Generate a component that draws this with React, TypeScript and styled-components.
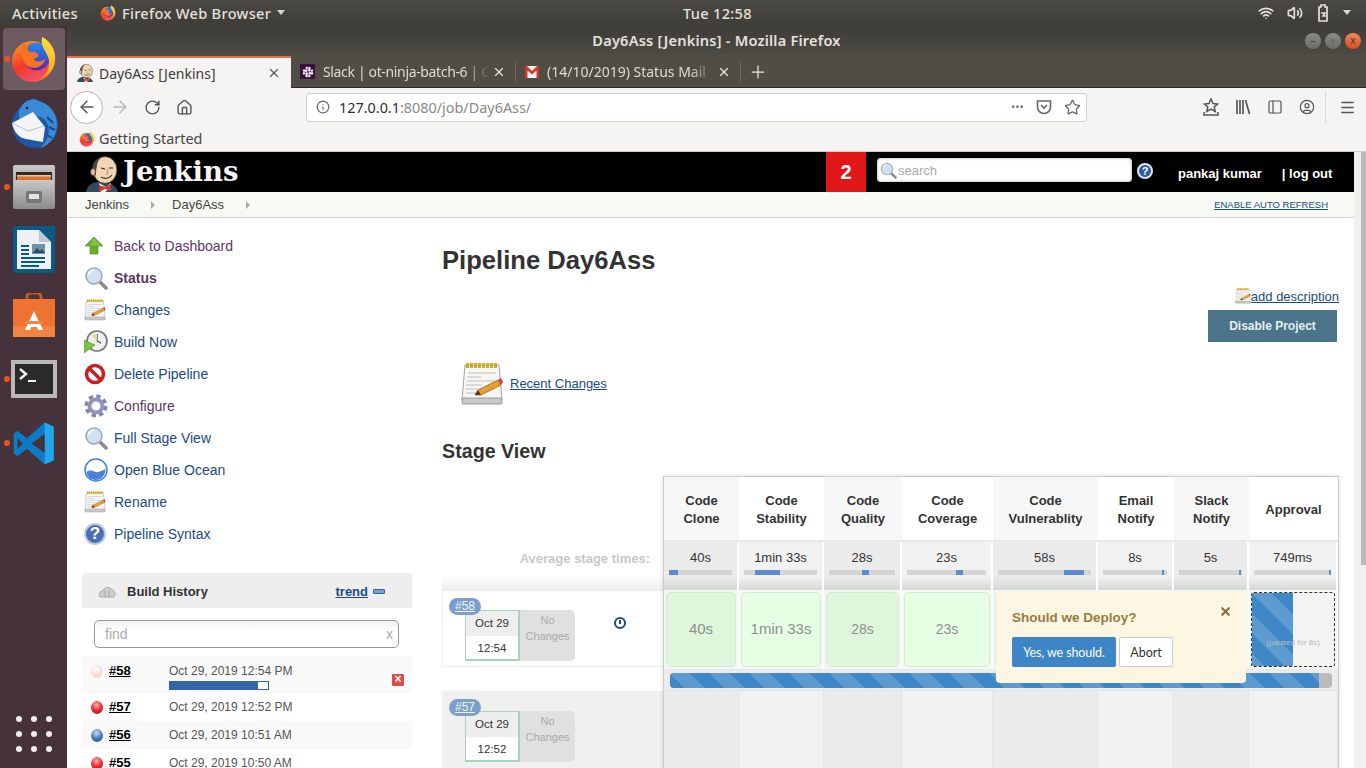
import styled, { createGlobalStyle, css } from 'styled-components';
import {
  ArrowLeft,
  ArrowRight,
  CircleUser,
  Home,
  Info,
  Menu,
  PanelLeft,
  Plus,
  RotateCw,
  Star,
  Volume2,
  Wifi,
  X,
} from 'lucide-react';
import { FaSlack } from 'react-icons/fa';

const UI_FONT = '"Noto Sans", "Open Sans", sans-serif';
const PAGE_FONT = '"Liberation Sans", Arial, sans-serif';
const COLUMNS = '75px 85px 78px 91px 105px 76px 75px 89px';

const STAGES = [
  { name: ['Code', 'Clone'], avg: '40s', left: 0, width: 15, time: '40s', big: true },
  { name: ['Code', 'Stability'], avg: '1min 33s', left: 15, width: 35, time: '1min 33s', big: true },
  { name: ['Code', 'Quality'], avg: '28s', left: 50, width: 11, time: '28s', big: false },
  { name: ['Code', 'Coverage'], avg: '23s', left: 62, width: 9, time: '23s', big: false },
  { name: ['Code', 'Vulnerablity'], avg: '58s', left: 71, width: 22, time: '', big: false },
  { name: ['Email', 'Notify'], avg: '8s', left: 92, width: 4, time: '', big: false },
  { name: ['Slack', 'Notify'], avg: '5s', left: 96, width: 3, time: '', big: false },
  { name: ['Approval'], avg: '749ms', left: 98, width: 2, time: '', big: false },
];

const TASKS = [
  { label: 'Back to Dashboard', icon: 'up', visited: true },
  { label: 'Status', icon: 'search', visited: true, bold: true },
  { label: 'Changes', icon: 'notes' },
  { label: 'Build Now', icon: 'clock' },
  { label: 'Delete Pipeline', icon: 'stop' },
  { label: 'Configure', icon: 'gear', visited: true },
  { label: 'Full Stage View', icon: 'search' },
  { label: 'Open Blue Ocean', icon: 'ocean' },
  { label: 'Rename', icon: 'notes' },
  { label: 'Pipeline Syntax', icon: 'help' },
];

const HISTORY = [
  { id: '#58', date: 'Oct 29, 2019 12:54 PM', color: 'pale', running: true },
  { id: '#57', date: 'Oct 29, 2019 12:52 PM', color: 'red' },
  { id: '#56', date: 'Oct 29, 2019 10:51 AM', color: 'blue' },
  { id: '#55', date: 'Oct 29, 2019 10:50 AM', color: 'red' },
];

function FirefoxIcon({ size }: { size: number }) {
  return (
    <svg width={size} height={size} viewBox="0 0 48 48">
      <defs>
        <linearGradient id="ffBody" x1="0.2" y1="0.1" x2="0.6" y2="1">
          <stop offset="0" stopColor="#ff8a1f" />
          <stop offset="0.5" stopColor="#f4362f" />
          <stop offset="1" stopColor="#f2566a" />
        </linearGradient>
        <linearGradient id="ffTail" x1="0.5" y1="0" x2="0.4" y2="1">
          <stop offset="0" stopColor="#ffe040" />
          <stop offset="0.7" stopColor="#ffb020" />
          <stop offset="1" stopColor="#f7641f" />
        </linearGradient>
        <linearGradient id="ffGlobe" x1="0.5" y1="0" x2="0.5" y2="1">
          <stop offset="0" stopColor="#1f8cf0" />
          <stop offset="1" stopColor="#4b2ab5" />
        </linearGradient>
      </defs>
      <circle cx="23" cy="26" r="21" fill="url(#ffBody)" />
      <circle cx="27" cy="21" r="14" fill="url(#ffGlobe)" />
      <path d="M33 1c9 5 14 14 13 24-1 12-11 21-23 21 10-1 17-9 17-19 0-10-10-15-7-26z" fill="url(#ffTail)" />
      <path d="M12 6c2 3 5 4 8 3-3 3-3 5 0 7 5 0 9 1 9 4 0 2-3 3-5 3 2 4 8 4 12 0-1 7-8 11-15 9C14 30 10 22 12 6z" fill="#f7731f" />
    </svg>
  );
}

function ThunderbirdIcon() {
  return (
    <svg width="50" height="52" viewBox="0 0 50 52">
      <circle cx="26" cy="28" r="23" fill="#1e57a6" />
      <path d="M10 14C14 3 24 0 30 4c11 3 18 13 18 24 0 11-8 21-17 23 8-7 11-16 7-25C34 16 22 20 14 24c-3 1-5-4-4-10z" fill="#3a8ad6" />
      <circle cx="18" cy="11" r="1.300" fill="#1a2b44" />
      <path d="M3 26l21-11 12 15-2 15-17-3Q6 40 3 26z" fill="#f4f4f6" />
      <path d="M3 26l16 8 16-5" fill="none" stroke="#b6c0cc" strokeWidth="1" />
      <path d="M38 20l6 6M40 30l6 3M38 38l5 3" stroke="#174a8e" strokeWidth="2" />
    </svg>
  );
}

function FilesIcon() {
  return (
    <svg width="42" height="44" viewBox="0 0 42 44">
      <defs>
        <linearGradient id="cabinet" x1="0" y1="0" x2="0" y2="1">
          <stop offset="0" stopColor="#c8c8c6" />
          <stop offset="1" stopColor="#8e8e8c" />
        </linearGradient>
      </defs>
      <rect x="0" y="0" width="42" height="44" rx="2" fill="url(#cabinet)" />
      <rect x="3" y="7" width="36" height="11" fill="#2e2a26" />
      <rect x="4" y="10" width="34" height="5" fill="#d9722e" />
      <rect x="4" y="10" width="34" height="1.500" fill="#f2c39a" />
      <rect x="1" y="15" width="40" height="28" fill="url(#cabinet)" />
      <rect x="13" y="26" width="16" height="12" rx="2" fill="#77777a" />
      <rect x="16" y="29" width="10" height="5" fill="#e4e4e2" />
    </svg>
  );
}

function WriterIcon() {
  return (
    <svg width="42" height="50" viewBox="0 0 42 50">
      <path d="M0 3a3 3 0 0 1 3-3h25l14 0v44a3 3 0 0 1-3 3H3a3 3 0 0 1-3-3z" fill="#0a5a86" />
      <path d="M4 4h22l12 12v27H4z" fill="#eef1f3" />
      <path d="M26 4l12 12H26z" fill="#bcc8d0" />
      <path d="M8 19h8v2H8zM8 23h8v2H8zM8 27h8v2H8zM8 31h24v2H8zM8 35h24v2H8zM8 39h18v2H8z" fill="#0a5a86" />
      <rect x="19" y="18" width="13" height="10" fill="#6e93ad" />
      <path d="M20 27l4-5 3 3 2-2 3 4z" fill="#2d4c62" />
    </svg>
  );
}

function SoftwareIcon() {
  return (
    <svg width="42" height="44" viewBox="0 0 42 44">
      <path d="M14 8V4a4 4 0 0 1 4-4h6a4 4 0 0 1 4 4v4" fill="none" stroke="#c9571f" strokeWidth="3" />
      <rect y="6" width="42" height="38" fill="#ee7230" />
      <rect y="33" width="42" height="11" fill="#f08544" />
      <path d="M21 18l9 19h-5l-1-3h-6l-1 3h-5z" fill="#fff" />
      <rect x="12" y="28" width="18" height="3" fill="#f08544" />
    </svg>
  );
}

function TerminalIcon() {
  return (
    <svg width="46" height="38" viewBox="0 0 46 38">
      <rect width="46" height="38" fill="#b9b9b7" />
      <rect x="4" y="4" width="38" height="30" fill="#2a2a2a" />
      <path d="M9 9l6 5-6 5" fill="none" stroke="#f2f2f2" strokeWidth="2.400" />
      <rect x="17" y="20" width="8" height="2" fill="#f2f2f2" />
    </svg>
  );
}

function CodeIcon() {
  return (
    <svg width="43" height="43" viewBox="0 0 100 100">
      <path d="M97 11L76 1 35 38 13 21l-9 5v48l9 5 22-17 41 37 21-10z" fill="#0a7bc4" />
      <path d="M76 1l21 10v78l-21 10V1z" fill="#22a6ee" />
      <path d="M76 28L45 50l31 22z" fill="#45323a" />
      <path d="M13 38l12 12-12 12z" fill="#45323a" />
    </svg>
  );
}

function JenkinsFace({ width, height }: { width: number; height: number }) {
  return (
    <svg width={width} height={height} viewBox="0 0 32 36">
      <path d="M0 36c1-7 7-10 13-10l11 1c4 2 7 5 8 9z" fill="#2f4d60" />
      <path d="M13 27l7 4 5-4-1 5-5 4h-4z" fill="#f4f4f4" />
      <ellipse cx="19" cy="14" rx="12" ry="13.500" fill="#f1d4b0" stroke="#2a2522" strokeWidth="0.800" />
      <path d="M7 20C4 10 9 2 16 1c-4 3-5 6-5 9-1 3-1 6-1 9z" fill="#4a4644" />
      <ellipse cx="7" cy="16" rx="2.500" ry="3.500" fill="#e9bd96" stroke="#2a2522" strokeWidth="0.600" />
      <path d="M15 12l4 1M23 12h4" stroke="#2a2522" strokeWidth="1.100" />
      <path d="M21 13l1 5h-2" fill="none" stroke="#b08a68" strokeWidth="0.900" />
      <path d="M15 21c3 2 8 2 11-2" fill="none" stroke="#3a3230" strokeWidth="1.200" />
      <path d="M13 29l6 2 6-3v7l-6-2-6 3z" fill="#d33833" />
    </svg>
  );
}

function GmailIcon() {
  return (
    <svg width="14" height="12" viewBox="0 0 14 12">
      <rect width="14" height="12" fill="#f4f4f4" />
      <path d="M0 0h2l5 5 5-5h2v12h-2.500V4.500L7 8.500 2.500 4.500V12H0z" fill="#d5372c" />
    </svg>
  );
}

function NotesIcon({ size }: { size: number }) {
  return (
    <svg width={size} height={size} viewBox="0 0 42 44">
      <path d="M4 3h34l3 35H1z" fill="#f6f6f4" stroke="#8c8c8a" strokeWidth="0.800" />
      <rect x="1" y="36" width="40" height="6" rx="1" fill="#c9c9c7" stroke="#8c8c8a" strokeWidth="0.800" />
      <path d="M5 3.500h32" stroke="#d4aa1e" strokeWidth="5" strokeDasharray="3 1" />
      <path d="M7 11h28M6 15h14M6 19h28M5 23h16M5 27h12M5 31h10" stroke="#b7b7b5" strokeWidth="0.900" />
      <path d="M14 33l3-5 20-10 3 5-20 10z" fill="#e5a030" stroke="#8a5a14" strokeWidth="0.700" />
      <path d="M37 18l3-2 2 4-2 3z" fill="#e23c3c" />
      <path d="M14 33l3-5 3 5z" fill="#4d3a20" />
    </svg>
  );
}

function SearchIcon({ size }: { size: number }) {
  return (
    <svg width={size} height={size} viewBox="0 0 24 24">
      <path d="M15 15l7 7" stroke="#8a8a88" strokeWidth="3.500" strokeLinecap="round" />
      <circle cx="10" cy="10" r="8" fill="#cfe0f3" stroke="#9fa7af" strokeWidth="1.500" />
      <path d="M5 9a5 5 0 0 1 5-5" fill="none" stroke="#ffffff" strokeWidth="1.500" />
    </svg>
  );
}

function TaskIcon({ kind }: { kind: string }) {
  if (kind === 'search') return <SearchIcon size={24} />;
  if (kind === 'notes') return <NotesIcon size={22} />;
  if (kind === 'up') {
    return (
      <svg width="20" height="20" viewBox="0 0 20 20">
        <path d="M10 1l9 9h-5v8H6v-8H1z" fill="#67ad2a" stroke="#4e8f1c" strokeWidth="0.600" />
        <path d="M10 2l7 7.500H5z" fill="#84c443" />
      </svg>
    );
  }
  if (kind === 'clock') {
    return (
      <svg width="24" height="24" viewBox="0 0 24 24">
        <circle cx="13" cy="11" r="10" fill="#eeeef0" stroke="#77777f" strokeWidth="1.600" />
        <path d="M13 11V4M13 11l4 2" stroke="#444" strokeWidth="1.200" />
        <path d="M13 4a7 7 0 0 0-5 2l5 5z" fill="#e7d58e" />
        <path d="M0 10l11 5-11 8z" fill="#7cc242" stroke="#4e8f1c" strokeWidth="0.600" />
      </svg>
    );
  }
  if (kind === 'stop') {
    return (
      <svg width="22" height="22" viewBox="0 0 22 22">
        <circle cx="11" cy="11" r="8.500" fill="#fff" stroke="#cc1f1f" strokeWidth="3.500" />
        <path d="M5 5l12 12" stroke="#cc1f1f" strokeWidth="3.500" />
      </svg>
    );
  }
  if (kind === 'gear') {
    return (
      <svg width="24" height="24" viewBox="0 0 24 24">
        <circle cx="12" cy="12" r="9.500" fill="none" stroke="#8186ad" strokeWidth="4" strokeDasharray="4.200 3.260" />
        <circle cx="12" cy="12" r="6.500" fill="none" stroke="#8f94b8" strokeWidth="4" />
      </svg>
    );
  }
  if (kind === 'ocean') {
    return (
      <svg width="24" height="24" viewBox="0 0 24 24">
        <circle cx="12" cy="12" r="11" fill="#fff" stroke="#3f7fe0" strokeWidth="1.500" />
        <path d="M2.500 14c5-4 8 1 12 0 3-1 5-2 7-3 0 6-4 11-9.500 11C7 22 3.500 19 2.500 14z" fill="#4a80d6" />
      </svg>
    );
  }
  return <HelpDisc $size={22}>?</HelpDisc>;
}

export default function App() {
  return (
    <Desktop>
      <GlobalStyle />
      <TopBar>
        <TopLeft>
          <TopLabel>Activities</TopLabel>
          <AppMenu>
            <FirefoxIcon size={16} />
            <TopLabel>Firefox Web Browser</TopLabel>
            <Caret />
          </AppMenu>
        </TopLeft>
        <TopLabel>Tue 12:58</TopLabel>
        <TopRight>
          <Wifi size={16} strokeWidth={2.5} />
          <Volume2 size={16} strokeWidth={2.5} />
          <svg width="14" height="18" viewBox="0 0 14 18">
            <path d="M3 3h2V1h4v2h2v14H3z" fill="none" stroke="#e4e1dc" strokeWidth="1.700" />
            <path d="M5 9h4l-2 3h3" fill="none" stroke="#e4e1dc" strokeWidth="1.500" />
          </svg>
          <Caret />
        </TopRight>
      </TopBar>
      <Workspace>
        <Dock>
          <DockItem $active $running>
            <FirefoxIcon size={47} />
          </DockItem>
          <DockItem>
            <ThunderbirdIcon />
          </DockItem>
          <DockItem $running>
            <FilesIcon />
          </DockItem>
          <DockItem>
            <WriterIcon />
          </DockItem>
          <DockItem>
            <SoftwareIcon />
          </DockItem>
          <DockItem $running>
            <TerminalIcon />
          </DockItem>
          <DockItem $running>
            <CodeIcon />
          </DockItem>
          <AppGrid>
            {Array.from({ length: 9 }).map((_, i) => (
              <AppDot key={i} />
            ))}
          </AppGrid>
        </Dock>
        <Browser>
          <TitleBar>
            <WindowTitle>Day6Ass [Jenkins] - Mozilla Firefox</WindowTitle>
            <WindowButtons>
              <WindowButton>–</WindowButton>
              <WindowButton>▫</WindowButton>
              <WindowButton $close>x</WindowButton>
            </WindowButtons>
          </TitleBar>
          <TabStrip>
            <ActiveTab>
              <JenkinsFace width={16} height={18} />
              <TabTitle $active>Day6Ass [Jenkins]</TabTitle>
              <X size={14} color="#555" />
            </ActiveTab>
            <Tab>
              <SlackBox>
                <FaSlack size={12} color="#fff" />
              </SlackBox>
              <TabTitle $tight>Slack | ot-ninja-batch-6 | C</TabTitle>
              <X size={14} color="#e8e6e1" />
            </Tab>
            <Tab>
              <GmailIcon />
              <TabTitle>(14/10/2019) Status Mail</TabTitle>
              <X size={14} color="#e8e6e1" />
            </Tab>
            <NewTab>
              <Plus size={20} color="#e8e6e1" strokeWidth={1.5} />
            </NewTab>
          </TabStrip>
          <NavBar>
            <BackButton>
              <ArrowLeft size={20} color="#555" strokeWidth={1.8} />
            </BackButton>
            <NavIcon>
              <ArrowRight size={20} color="#b8b8b8" strokeWidth={1.8} />
            </NavIcon>
            <NavIcon>
              <RotateCw size={17} color="#555" strokeWidth={2} />
            </NavIcon>
            <NavIcon>
              <Home size={17} color="#555" strokeWidth={2} />
            </NavIcon>
            <UrlBar>
              <Info size={14} color="#666" />
              <UrlText>
                127.0.0.1<UrlDim>:8080/job/Day6Ass/</UrlDim>
              </UrlText>
              <UrlDots>•••</UrlDots>
              <svg width="16" height="16" viewBox="0 0 16 16">
                <path d="M1.500 2h13v6a6.500 6.500 0 0 1-13 0z" fill="none" stroke="#666" strokeWidth="1.600" />
                <path d="M5 6l3 3 3-3" fill="none" stroke="#666" strokeWidth="1.600" />
              </svg>
              <Star size={17} color="#666" strokeWidth={1.8} />
            </UrlBar>
            <ToolIcons>
              <svg width="16" height="18" viewBox="0 0 16 18">
                <path d="M8 1l2 4.500 4.500.5-3.300 3 1 4.500L8 11l-4.200 2.500 1-4.500L1.500 6 6 5.500z" fill="none" stroke="#555" strokeWidth="1.500" />
                <path d="M1 14v3h14v-3" fill="none" stroke="#555" strokeWidth="1.500" />
              </svg>
              <svg width="16" height="16" viewBox="0 0 16 16">
                <path d="M2 1v14M5 1v14M8 1v14M10.500 1l4 14" stroke="#555" strokeWidth="1.700" />
              </svg>
              <PanelLeft size={16} color="#555" strokeWidth={1.8} />
              <CircleUser size={16} color="#555" strokeWidth={1.8} />
              <ToolSeparator />
              <Menu size={17} color="#555" strokeWidth={2} />
            </ToolIcons>
          </NavBar>
          <BookmarkBar>
            <FirefoxIcon size={16} />
            <BookmarkLabel>Getting Started</BookmarkLabel>
          </BookmarkBar>
          <Viewport>
            <Page>
              <JenkinsHeader>
                <LogoBlock>
                  <JenkinsFace width={32} height={36} />
                  <LogoText>Jenkins</LogoText>
                </LogoBlock>
                <AlertBadge>2</AlertBadge>
                <SearchField>
                  <SearchIcon size={17} />
                  <SearchHint>search</SearchHint>
                </SearchField>
                <HeaderHelp $size={16}>?</HeaderHelp>
                <UserName>pankaj kumar</UserName>
                <LogOut>| log out</LogOut>
              </JenkinsHeader>
              <Breadcrumbs>
                <Crumb>Jenkins</Crumb>
                <CrumbArrow />
                <Crumb>Day6Ass</Crumb>
                <CrumbArrow />
                <AutoRefresh>ENABLE AUTO REFRESH</AutoRefresh>
              </Breadcrumbs>
              <Content>
                <SideColumn>
                  <TaskList>
                    {TASKS.map((task) => (
                      <TaskRow key={task.label}>
                        <TaskIconBox>
                          <TaskIcon kind={task.icon} />
                        </TaskIconBox>
                        <TaskLink $visited={task.visited} $bold={task.bold}>
                          {task.label}
                        </TaskLink>
                      </TaskRow>
                    ))}
                  </TaskList>
                  <HistoryPanel>
                    <HistoryHeader>
                      <svg width="18" height="14" viewBox="0 0 18 14">
                        <path d="M2 12c-2-3 0-6 3-6 1-4 7-5 9-1 3 0 4 4 2 7z" fill="#cfcfcd" stroke="#a8a8a6" strokeWidth="1" />
                        <path d="M7 5v7M11 5v7" stroke="#a8a8a6" strokeWidth="1" />
                      </svg>
                      <HistoryTitle>Build History</HistoryTitle>
                      <TrendLink>trend</TrendLink>
                      <TrendDash />
                    </HistoryHeader>
                    <FindRow>
                      <FindField>
                        <span>find</span>
                        <span>x</span>
                      </FindField>
                    </FindRow>
                    {HISTORY.map((build, i) => (
                      <HistoryRow key={build.id} $striped={i % 2 === 0} $tall={build.running}>
                        <Ball $color={build.color} />
                        <HistoryId>{build.id}</HistoryId>
                        <HistoryMeta>
                          <HistoryDate>{build.date}</HistoryDate>
                          {build.running && (
                            <HistoryBar>
                              <HistoryBarFill />
                            </HistoryBar>
                          )}
                        </HistoryMeta>
                        {build.running && <CancelBox>×</CancelBox>}
                      </HistoryRow>
                    ))}
                  </HistoryPanel>
                </SideColumn>
                <MainColumn>
                  <PageTitle>Pipeline Day6Ass</PageTitle>
                  <DescriptionRow>
                    <NotesIcon size={16} />
                    <PageLink>add description</PageLink>
                  </DescriptionRow>
                  <DisableRow>
                    <DisableButton>Disable Project</DisableButton>
                  </DisableRow>
                  <RecentChanges>
                    <NotesIcon size={44} />
                    <RecentLink>Recent Changes</RecentLink>
                  </RecentChanges>
                  <SectionTitle>Stage View</SectionTitle>
                  <StageView>
                    <BuildColumn>
                      <AverageLabel>Average stage times:</AverageLabel>
                      <BuildRow>
                        <BuildTag>#58</BuildTag>
                        <BuildDate>
                          <DateTop>Oct 29</DateTop>
                          <DateBottom>12:54</DateBottom>
                        </BuildDate>
                        <NoChanges>
                          No
                          <br />
                          Changes
                        </NoChanges>
                        <PauseMark />
                      </BuildRow>
                      <BuildRow $shaded>
                        <BuildTag>#57</BuildTag>
                        <BuildDate>
                          <DateTop>Oct 29</DateTop>
                          <DateBottom>12:52</DateBottom>
                        </BuildDate>
                        <NoChanges>
                          No
                          <br />
                          Changes
                        </NoChanges>
                      </BuildRow>
                    </BuildColumn>
                    <StageTable>
                      <HeadRow>
                        {STAGES.map((s, i) => (
                          <HeadCell key={i} $odd={i % 2 === 0}>
                            {s.name.map((line) => (
                              <div key={line}>{line}</div>
                            ))}
                          </HeadCell>
                        ))}
                      </HeadRow>
                      <AverageRow>
                        {STAGES.map((s, i) => (
                          <AverageCell key={i} $odd={i % 2 === 0}>
                            <div>{s.avg}</div>
                            <TimeTrack>
                              <TimeSlice $left={s.left} $width={s.width} />
                            </TimeTrack>
                          </AverageCell>
                        ))}
                      </AverageRow>
                      <ResultRow>
                        {STAGES.map((s, i) => (
                          <ResultSlot key={i} $odd={i % 2 === 0}>
                            {i === 7 ? (
                              <PausedCell>
                                <PausedFill />
                                <PausedNote>(paused for 8s)</PausedNote>
                              </PausedCell>
                            ) : (
                              <PassedCell $odd={i % 2 === 0} $big={s.big}>
                                {s.time}
                              </PassedCell>
                            )}
                          </ResultSlot>
                        ))}
                      </ResultRow>
                      <ProgressRow>
                        <ProgressTrack>
                          <ProgressFill />
                        </ProgressTrack>
                      </ProgressRow>
                      <EmptyRow>
                        {STAGES.map((_, i) => (
                          <EmptyCell key={i} $odd={i % 2 === 0} />
                        ))}
                      </EmptyRow>
                      <InputPopover>
                        <PopoverHead>
                          <PopoverTitle>Should we Deploy?</PopoverTitle>
                          <X size={13} color="#8a6d3b" strokeWidth={4} />
                        </PopoverHead>
                        <PopoverActions>
                          <YesButton>Yes, we should.</YesButton>
                          <AbortButton>Abort</AbortButton>
                        </PopoverActions>
                      </InputPopover>
                    </StageTable>
                  </StageView>
                </MainColumn>
              </Content>
            </Page>
            <Scrollbar>
              <ScrollThumb />
            </Scrollbar>
          </Viewport>
        </Browser>
      </Workspace>
    </Desktop>
  );
}

const GlobalStyle = createGlobalStyle`
  html, body {
    margin: 0;
    padding: 0;
    background: #fff;
    overflow: hidden;
  }
  * {
    box-sizing: border-box;
  }
`;

const Desktop = styled.div`
  width: 1366px;
  height: 768px;
  display: flex;
  flex-direction: column;
  overflow: hidden;
  font-family: ${UI_FONT};
`;

const TopBar = styled.div`
  height: 27px;
  flex: none;
  display: grid;
  grid-template-columns: 671px auto 1fr;
  align-items: center;
  padding: 0 12px 2px;
  background: linear-gradient(#4b4943, #3e3c37);
  color: #e4e1dc;
`;

const TopLeft = styled.div`
  display: flex;
  align-items: center;
  gap: 22px;
`;

const AppMenu = styled.div`
  display: flex;
  align-items: center;
  gap: 6px;
`;

const TopLabel = styled.span`
  font-size: 14.6px;
  font-weight: 500;
  letter-spacing: 0.3px;
`;

const Caret = styled.span`
  width: 0;
  height: 0;
  border-left: 4.5px solid transparent;
  border-right: 4.5px solid transparent;
  border-top: 5px solid #d8d5d0;
`;

const TopRight = styled.div`
  display: flex;
  justify-content: flex-end;
  align-items: center;
  gap: 13px;
  padding-right: 3px;
`;

const Workspace = styled.div`
  flex: 1;
  display: flex;
  min-height: 0;
`;

const Dock = styled.div`
  width: 67px;
  flex: none;
  background: #45323a;
  padding-top: 1px;
  display: flex;
  flex-direction: column;
  align-items: center;
  gap: 2px;
`;

const DockItem = styled.div<{ $active?: boolean; $running?: boolean }>`
  position: relative;
  width: 62px;
  height: 62px;
  flex: none;
  display: flex;
  align-items: center;
  justify-content: center;
  border-radius: 4px;
  ${(p) =>
    p.$active &&
    css`
      background: #6e5b62;
    `}
  ${(p) =>
    p.$running &&
    css`
      &::before {
        content: '';
        position: absolute;
        left: 1px;
        top: 28px;
        width: 6px;
        height: 6px;
        border-radius: 50%;
        background: #e95420;
      }
    `}
`;

const AppGrid = styled.div`
  margin-top: auto;
  margin-bottom: 16px;
  display: grid;
  grid-template-columns: repeat(3, 6px);
  gap: 9px;
`;

const AppDot = styled.div`
  width: 6px;
  height: 6px;
  border-radius: 50%;
  background: #f2eeef;
`;

const Browser = styled.div`
  flex: 1;
  min-width: 0;
  display: flex;
  flex-direction: column;
`;

const TitleBar = styled.div`
  position: relative;
  height: 27px;
  flex: none;
  display: flex;
  align-items: center;
  justify-content: center;
  padding-bottom: 1px;
  background: linear-gradient(#3f3d38, #4c4a44);
`;

const WindowTitle = styled.div`
  font-size: 14.6px;
  font-weight: 600;
  letter-spacing: 0.2px;
  color: #e4e1dc;
`;

const WindowButtons = styled.div`
  position: absolute;
  right: 5px;
  top: 6px;
  display: flex;
  gap: 4px;
`;

const WindowButton = styled.div<{ $close?: boolean }>`
  width: 16px;
  height: 16px;
  border-radius: 50%;
  font-size: 10px;
  line-height: 15px;
  text-align: center;
  color: #3c3b37;
  background: ${(p) => (p.$close ? 'linear-gradient(#f08a5d, #df4a16)' : 'linear-gradient(#8c8a84, #6d6b65)')};
`;

const TabStrip = styled.div`
  height: 34px;
  flex: none;
  display: flex;
  align-items: flex-end;
  background: #4f4d46;
  border-bottom: 1px solid #2c2b27;
`;

const ActiveTab = styled.div`
  width: 224px;
  height: 32px;
  margin-bottom: -1px;
  display: flex;
  align-items: center;
  gap: 6px;
  padding: 0 10px;
  background: #f5f4f3;
  border-top: 2px solid #e9714a;
`;

const Tab = styled.div`
  width: 225px;
  height: 31px;
  display: flex;
  align-items: center;
  gap: 8px;
  padding: 0 10px 0 9px;
  position: relative;
  &::after {
    content: '';
    position: absolute;
    right: 0;
    top: 5px;
    bottom: 4px;
    width: 1px;
    background: #6d6b65;
  }
`;

const TabTitle = styled.span<{ $active?: boolean; $tight?: boolean }>`
  flex: 1;
  min-width: 0;
  margin-right: ${(p) => (p.$active ? 0 : -6)}px;
  overflow: hidden;
  white-space: nowrap;
  font-size: 14px;
  letter-spacing: ${(p) => (p.$tight ? -0.35 : 0)}px;
  color: ${(p) => (p.$active ? '#3d3b37' : '#dedbd5')};
  ${(p) =>
    !p.$active &&
    css`
      mask-image: linear-gradient(to right, #000 85%, transparent);
    `}
`;

const SlackBox = styled.span`
  width: 15px;
  height: 15px;
  flex: none;
  display: flex;
  align-items: center;
  justify-content: center;
  background: #3f0e40;
`;

const NewTab = styled.div`
  height: 31px;
  padding-left: 7px;
  display: flex;
  align-items: center;
`;

const NavBar = styled.div`
  height: 38px;
  flex: none;
  display: flex;
  align-items: center;
  padding-left: 3px;
  background: #f5f4f3;
`;

const BackButton = styled.div`
  width: 33px;
  height: 33px;
  flex: none;
  display: flex;
  align-items: center;
  justify-content: center;
  border-radius: 50%;
  background: #fff;
  border: 1px solid #b5b5b3;
`;

const NavIcon = styled.div`
  width: 32px;
  flex: none;
  display: flex;
  justify-content: center;
  &:nth-child(2) {
    margin-left: 1px;
  }
`;

const UrlBar = styled.div`
  width: 781px;
  height: 29px;
  margin-left: 106px;
  display: flex;
  align-items: center;
  padding: 0 5px 0 9px;
  background: #fff;
  border: 1px solid #cfcfcd;
  border-radius: 3px;
  gap: 12px;
`;

const UrlText = styled.div`
  flex: 1;
  margin-left: -3px;
  font-size: 14.4px;
  color: #2e2e2e;
`;

const UrlDim = styled.span`
  color: #8a8a88;
`;

const UrlDots = styled.span`
  font-size: 10px;
  letter-spacing: 0.5px;
  color: #666;
`;

const ToolIcons = styled.div`
  flex: 1;
  display: flex;
  align-items: center;
  padding-left: 116px;
  gap: 16px;
`;

const ToolSeparator = styled.div`
  width: 1px;
  height: 32px;
  margin: 0 -3px 0 -6px;
  background: #dcdcda;
`;

const BookmarkBar = styled.div`
  height: 26px;
  flex: none;
  display: flex;
  align-items: center;
  gap: 4px;
  padding-left: 12px;
  background: #f5f4f3;
  border-bottom: 1px solid #d0d0ce;
`;

const BookmarkLabel = styled.span`
  font-size: 14.4px;
  color: #444;
`;

const Viewport = styled.div`
  flex: 1;
  min-height: 0;
  display: flex;
`;

const Page = styled.div`
  width: 1287px;
  flex: none;
  overflow: hidden;
  font-family: ${PAGE_FONT};
  background: #fff;
`;

const Scrollbar = styled.div`
  flex: 1;
  display: flex;
  justify-content: flex-end;
  background: #f2f1ef;
`;

const ScrollThumb = styled.div`
  width: 5px;
  height: 413px;
  background: #b9b9b9;
`;

const JenkinsHeader = styled.div`
  height: 40px;
  display: flex;
  align-items: center;
  background: #000;
  color: #fff;
`;

const LogoBlock = styled.div`
  width: 759px;
  height: 40px;
  flex: none;
  display: flex;
  align-items: flex-end;
  gap: 5px;
  padding-left: 19px;
`;

const LogoText = styled.div`
  align-self: center;
  margin-bottom: 3px;
  font-family: 'DejaVu Serif', 'Liberation Serif', serif;
  font-size: 27.5px;
  font-weight: 700;
  color: #f6f6f6;
`;

const AlertBadge = styled.div`
  width: 40px;
  height: 40px;
  flex: none;
  display: flex;
  align-items: center;
  justify-content: center;
  font-size: 20px;
  font-weight: 700;
  background: #e2171a;
`;

const SearchField = styled.div`
  width: 255px;
  height: 24px;
  flex: none;
  margin: 0 5px 4px 11px;
  display: flex;
  align-items: center;
  gap: 1px;
  padding-left: 3px;
  background: #fff;
  border-radius: 4px;
  box-shadow: inset 0 0 3px #999;
`;

const SearchHint = styled.span`
  font-size: 13px;
  color: #aaa;
`;

const HelpDisc = styled.span<{ $size: number }>`
  width: ${(p) => p.$size}px;
  height: ${(p) => p.$size}px;
  flex: none;
  display: inline-flex;
  align-items: center;
  justify-content: center;
  border-radius: 50%;
  font-size: ${(p) => p.$size - 5}px;
  font-weight: 700;
  color: #fff;
  background: #4a6fae;
  border: 2px solid #b9cbe6;
`;

const HeaderHelp = styled(HelpDisc)`
  margin-bottom: 2px;
  background: #2d5aa0;
  border-color: #dbe6f4;
`;

const UserName = styled.span`
  margin-left: 25px;
  padding-top: 2px;
  font-size: 13px;
  font-weight: 700;
`;

const LogOut = styled.span`
  margin-left: 20px;
  padding-top: 2px;
  font-size: 13px;
  font-weight: 700;
`;

const Breadcrumbs = styled.div`
  height: 26px;
  display: flex;
  align-items: center;
  padding: 0 26px 0 18px;
  background: #f6faf3;
  border-bottom: 1px solid #d3d7cf;
`;

const Crumb = styled.span`
  font-size: 13px;
  color: #444;
`;

const CrumbArrow = styled.span`
  width: 0;
  height: 0;
  margin: 0 17px 0 22px;
  border-top: 4px solid transparent;
  border-bottom: 4px solid transparent;
  border-left: 4px solid #aaa;
`;

const AutoRefresh = styled.span`
  margin-left: auto;
  font-size: 9.5px;
  color: #204a87;
  text-decoration: underline;
`;

const Content = styled.div`
  display: flex;
  padding: 12px 15px 0;
`;

const SideColumn = styled.div`
  width: 330px;
  flex: none;
`;

const TaskList = styled.div`
  display: flex;
  flex-direction: column;
`;

const TaskRow = styled.div`
  height: 32px;
  display: flex;
  align-items: center;
`;

const TaskIconBox = styled.div`
  width: 32px;
  flex: none;
  padding-left: 2px;
  display: flex;
  align-items: center;
`;

const TaskLink = styled.span<{ $visited?: boolean; $bold?: boolean }>`
  font-size: 14px;
  font-weight: ${(p) => (p.$bold ? 700 : 400)};
  color: ${(p) => (p.$visited ? '#5c3566' : '#204a87')};
`;

const HistoryPanel = styled.div`
  margin-top: 23px;
  background: #fff;
  border-radius: 4px 4px 0 0;
`;

const HistoryHeader = styled.div`
  height: 35px;
  display: flex;
  align-items: center;
  padding: 2px 27px 0 16px;
  background: #eeeeee;
  border-radius: 4px 4px 0 0;
`;

const HistoryTitle = styled.span`
  flex: 1;
  margin-left: 11px;
  font-size: 13px;
  font-weight: 700;
  color: #333;
`;

const TrendLink = styled.span`
  font-size: 13px;
  font-weight: 700;
  color: #204a87;
  text-decoration: underline;
`;

const TrendDash = styled.span`
  width: 12px;
  height: 5px;
  margin-left: 5px;
  background: #7aa0d0;
  border: 1px solid #3465a4;
  border-radius: 1px;
`;

const FindRow = styled.div`
  padding: 12px 13px 8px 12px;
`;

const FindField = styled.div`
  height: 28px;
  display: flex;
  align-items: center;
  justify-content: space-between;
  padding: 0 5px 0 10px;
  border: 1px solid #999;
  border-radius: 5px;
  font-size: 14px;
  color: #aaa;
  background: linear-gradient(#f2f2f2, #fff 40%);
`;

const HistoryRow = styled.div<{ $striped?: boolean; $tall?: boolean }>`
  position: relative;
  height: ${(p) => (p.$tall ? 37 : 28)}px;
  display: flex;
  align-items: flex-start;
  padding: ${(p) => (p.$tall ? 6 : 5)}px 0 0 9px;
  background: ${(p) => (p.$striped ? '#f9f9f9' : '#fff')};
`;

const BALLS: Record<string, string> = {
  pale: 'radial-gradient(circle at 45% 35%, #fff 0, #fbdada 55%, #f8caca 100%)',
  red: 'radial-gradient(circle at 45% 30%, #ffb0b0 0, #e8282e 50%, #a81014 100%)',
  blue: 'radial-gradient(circle at 45% 30%, #c8dcf2 0, #3f74b6 55%, #1f4680 100%)',
};

const Ball = styled.span<{ $color: string }>`
  width: 12px;
  height: 13px;
  margin-top: 3px;
  flex: none;
  border-radius: 50%;
  background: ${(p) => BALLS[p.$color]};
`;

const HistoryId = styled.span`
  width: 60px;
  margin-left: 6px;
  flex: none;
  font-size: 13px;
  line-height: 18px;
  font-weight: 700;
  color: #000;
  text-decoration: underline;
`;

const HistoryMeta = styled.div`
  display: flex;
  flex-direction: column;
`;

const HistoryDate = styled.span`
  font-size: 12px;
  line-height: 18px;
  color: #555;
`;

const HistoryBar = styled.div`
  width: 100px;
  height: 9px;
  margin-top: 1px;
  background: #fff;
  border: 1px solid #3465a4;
`;

const HistoryBarFill = styled.div`
  width: 90%;
  height: 100%;
  background: #3465a4;
`;

const CancelBox = styled.span`
  position: absolute;
  right: 8px;
  top: 18px;
  width: 12px;
  height: 12px;
  font-size: 12px;
  line-height: 11px;
  font-weight: 700;
  text-align: center;
  color: #fff;
  background: #dd4b4b;
  border-radius: 1px;
`;

const MainColumn = styled.div`
  width: 897px;
  margin-left: 30px;
  margin-top: -12px;
  flex: none;
`;

const PageTitle = styled.h1`
  margin: 0;
  padding-top: 27px;
  font-size: 25.6px;
  line-height: 30px;
  font-weight: 700;
  color: #333;
`;

const DescriptionRow = styled.div`
  margin-top: 13px;
  height: 16px;
  display: flex;
  justify-content: flex-end;
  align-items: center;
`;

const PageLink = styled.span`
  font-size: 13px;
  color: #204a87;
  text-decoration: underline;
`;

const RecentLink = styled(PageLink)`
  padding-bottom: 2px;
`;

const DisableRow = styled.div`
  margin-top: 6px;
  padding-right: 2px;
  display: flex;
  justify-content: flex-end;
`;

const DisableButton = styled.div`
  width: 129px;
  height: 32px;
  display: flex;
  align-items: center;
  justify-content: center;
  font-size: 12px;
  font-weight: 700;
  color: #e8eef2;
  background: #4b758b;
`;

const RecentChanges = styled.div`
  margin: 20px 0 0 18px;
  display: flex;
  align-items: center;
  gap: 6px;
`;

const SectionTitle = styled.h2`
  margin: 33px 0 0;
  font-size: 19.7px;
  line-height: 24px;
  font-weight: 700;
  color: #333;
`;

const StageView = styled.div`
  margin-top: 13px;
  display: flex;
`;

const BuildColumn = styled.div`
  width: 221px;
  flex: none;
  padding-top: 66px;
`;

const AverageLabel = styled.div`
  height: 48px;
  padding: 9px 13px 0 0;
  text-align: right;
  font-size: 13px;
  font-weight: 700;
  color: #c8c8c8;
  background: linear-gradient(#fff 70%, #eee);
`;

const BuildRow = styled.div<{ $shaded?: boolean }>`
  position: relative;
  height: 77px;
  margin-bottom: 24px;
  display: flex;
  padding: 19px 0 0 22px;
  border: 1px solid #eee;
  border-right: 0;
  background: ${(p) => (p.$shaded ? '#f0f0f0' : '#fff')};
`;

const BuildTag = styled.span`
  position: absolute;
  left: 6px;
  top: 7px;
  width: 32px;
  height: 17px;
  z-index: 1;
  border-radius: 9px;
  text-align: center;
  font-size: 12px;
  line-height: 17px;
  color: #eef3f8;
  background: #7c9fc9;
  text-decoration: underline;
`;

const BuildDate = styled.div`
  width: 55px;
  height: 51px;
  flex: none;
  border: 1px solid #a9d3b9;
  border-width: 1px 2px 2px 1px;
  font-size: 11.5px;
  color: #333;
  text-align: center;
`;

const DateTop = styled.div`
  height: 25px;
  line-height: 25px;
  background: #eeeeee;
`;

const DateBottom = styled.div`
  height: 23px;
  line-height: 24px;
  background: #fff;
`;

const NoChanges = styled.div`
  width: 55px;
  height: 51px;
  flex: none;
  padding-top: 2px;
  text-align: center;
  font-size: 11px;
  line-height: 16px;
  color: #aaa;
  background: #e0e0e0;
  border-radius: 0 5px 5px 0;
`;

const PauseMark = styled.span`
  position: absolute;
  left: 171px;
  top: 26px;
  width: 12px;
  height: 12px;
  border-radius: 50%;
  border: 2.5px solid #204a87;
  &::after {
    content: '';
    position: absolute;
    left: 2.5px;
    top: 1px;
    width: 2px;
    height: 4px;
    background: #204a87;
  }
`;

const StageTable = styled.div`
  position: relative;
  width: 676px;
  height: 300px;
  flex: none;
  background: #fff;
  border: 1px solid #ccc;
  border-bottom: 0;
  box-shadow: 0 0 4px rgba(0, 0, 0, 0.15);
`;

const HeadRow = styled.div`
  display: grid;
  grid-template-columns: ${COLUMNS};
  height: 65px;
  border-bottom: 2px solid #e8e8e8;
`;

const HeadCell = styled.div<{ $odd: boolean }>`
  display: flex;
  flex-direction: column;
  justify-content: center;
  align-items: center;
  padding-top: 2px;
  font-size: 13px;
  line-height: 18px;
  font-weight: 700;
  color: #333;
  background: ${(p) => (p.$odd ? '#f7f7f7' : '#fff')};
`;

const AverageRow = styled.div`
  display: grid;
  grid-template-columns: ${COLUMNS};
  height: 48px;
`;

const AverageCell = styled.div<{ $odd: boolean }>`
  padding: 8px 5px 0;
  text-align: center;
  font-size: 13px;
  line-height: 15px;
  color: #333;
  border-right: 2px solid #fff;
  background: linear-gradient(${(p) => (p.$odd ? '#ebebeb' : '#f2f2f2')} 70%, #d8d8d8);
`;

const TimeTrack = styled.div`
  position: relative;
  height: 5px;
  margin-top: 5px;
  background: #d5d5d5;
`;

const TimeSlice = styled.div<{ $left: number; $width: number }>`
  position: absolute;
  top: 0;
  bottom: 0;
  left: ${(p) => p.$left}%;
  width: ${(p) => p.$width}%;
  background: #5b8bd0;
`;

const ResultRow = styled.div`
  display: grid;
  grid-template-columns: ${COLUMNS};
  height: 80px;
  border-bottom: 1px solid #e8e8e8;
`;

const ResultSlot = styled.div<{ $odd: boolean }>`
  padding: 2px;
  border-right: 1px solid #fff;
  background: ${(p) => (p.$odd ? '#f2f9f0' : '#f4faf2')};
`;

const PassedCell = styled.div<{ $odd: boolean; $big: boolean }>`
  height: 75px;
  padding-bottom: 2px;
  display: flex;
  align-items: center;
  justify-content: center;
  font-size: ${(p) => (p.$big ? 15 : 14)}px;
  color: #8d918b;
  border: 1px solid #d7e8d5;
  border-radius: 5px;
  background: ${(p) => (p.$odd ? '#def7dc' : '#e6ffe4')};
`;

const PausedCell = styled.div`
  position: relative;
  height: 75px;
  border: 1px dashed #333;
  border-radius: 3px;
  background: #f3f3f3;
`;

const stripes = css`
  background-color: #3f88c8;
  background-image: linear-gradient(
    45deg,
    rgba(255, 255, 255, 0.15) 25%,
    transparent 25%,
    transparent 50%,
    rgba(255, 255, 255, 0.15) 50%,
    rgba(255, 255, 255, 0.15) 75%,
    transparent 75%,
    transparent
  );
  background-size: 40px 40px;
`;

const PausedFill = styled.div`
  ${stripes};
  width: 50%;
  height: 100%;
`;

const PausedNote = styled.span`
  position: absolute;
  left: 0;
  right: 0;
  top: 45px;
  text-align: center;
  font-size: 8px;
  color: #bbb;
`;

const ProgressRow = styled.div`
  height: 21px;
  padding: 3px 6px 0;
  background: #ececec;
  border-bottom: 1px solid #e2e2e2;
`;

const ProgressTrack = styled.div`
  height: 15px;
  border-radius: 4px;
  overflow: hidden;
  background: #bbb;
`;

const ProgressFill = styled.div`
  ${stripes};
  width: 98%;
  height: 100%;
`;

const EmptyRow = styled.div`
  display: grid;
  grid-template-columns: ${COLUMNS};
  height: 80px;
`;

const EmptyCell = styled.div<{ $odd: boolean }>`
  border-right: 1px solid #e4e4e4;
  background: ${(p) => (p.$odd ? '#ebebeb' : '#f1f1f1')};
`;

const InputPopover = styled.div`
  position: absolute;
  left: 332px;
  top: 115px;
  width: 250px;
  height: 91px;
  padding: 17px 14px 0 16px;
  border-radius: 4px;
  background: #fcf6e3;
`;

const PopoverHead = styled.div`
  display: flex;
  justify-content: space-between;
  align-items: flex-start;
  svg {
    margin-top: -4px;
  }
`;

const PopoverTitle = styled.div`
  font-size: 13.5px;
  line-height: 18px;
  font-weight: 700;
  color: #997b3f;
`;

const PopoverActions = styled.div`
  margin-top: 10px;
  display: flex;
  gap: 3px;
`;

const YesButton = styled.div`
  width: 104px;
  height: 30px;
  display: flex;
  align-items: center;
  justify-content: center;
  font-family: Lato, ${UI_FONT};
  font-size: 12.5px;
  letter-spacing: -0.1px;
  color: #fff;
  background: #3d85c6;
  border-radius: 2px;
`;

const AbortButton = styled.div`
  width: 54px;
  height: 30px;
  display: flex;
  align-items: center;
  justify-content: center;
  font-family: Lato, ${UI_FONT};
  font-size: 12.5px;
  color: #333;
  background: #fff;
  border: 1px solid #ccc;
  border-radius: 2px;
`;
